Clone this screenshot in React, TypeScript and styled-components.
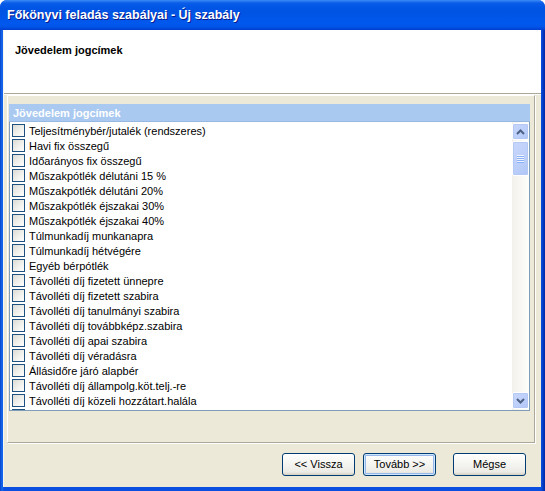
import * as React from "react";
import styled, { createGlobalStyle } from "styled-components";

const GlobalStyle = createGlobalStyle`
  html, body {
    margin: 0;
    padding: 0;
    background: #ffffff;
  }
  * {
    box-sizing: border-box;
  }
`;

// the last entry is the row cut off by the list's bottom edge
const items = [
  "Teljesítménybér/jutalék (rendszeres)",
  "Havi fix összegű",
  "Időarányos fix összegű",
  "Műszakpótlék délutáni 15 %",
  "Műszakpótlék délutáni 20%",
  "Műszakpótlék éjszakai 30%",
  "Műszakpótlék éjszakai 40%",
  "Túlmunkadíj munkanapra",
  "Túlmunkadíj hétvégére",
  "Egyéb bérpótlék",
  "Távolléti díj fizetett ünnepre",
  "Távolléti díj fizetett szabira",
  "Távolléti díj tanulmányi szabira",
  "Távolléti díj továbbképz.szabira",
  "Távolléti díj apai szabira",
  "Távolléti díj véradásra",
  "Állásidőre járó alapbér",
  "Távolléti díj állampolg.köt.telj.-re",
  "Távolléti díj közeli hozzátart.halála",
  "",
];

const Window = styled.div`
  width: 545px;
  height: 491px;
  display: flex;
  flex-direction: column;
  border-radius: 7px 7px 0 0;
  overflow: hidden;
  background: linear-gradient(90deg, #0842c8 0, #166aee 2px, #0a4fe0 4px, #0a4fe0 calc(100% - 4px), #0027a8 100%);
`;

const TitleBar = styled.div`
  height: 30px;
  flex: none;
  display: flex;
  align-items: center;
  padding: 0 0 1px 7px;
  background: linear-gradient(
    180deg,
    #3c8cf6 0,
    #0a5ce8 3px,
    #0055e5 8px,
    #0054e3 40%,
    #0058ee 80%,
    #0054e6 90%,
    #003dd0 100%
  );
`;

const TitleText = styled.span`
  font-family: "Liberation Sans", Arial, sans-serif;
  font-weight: bold;
  font-size: 12.5px;
  color: #ffffff;
  text-shadow: 1px 1px 0 #0a1a8a;
`;

const Client = styled.div`
  flex: 1;
  min-height: 0;
  margin: 0 4px 4px 3px;
  display: flex;
  flex-direction: column;
  background: #ece9d8;
  border-left: 1px solid #f6f5ef;
`;

const Header = styled.div`
  height: 64px;
  flex: none;
  background: #ffffff;
  padding: 14px 0 0 11px;
  border-bottom: 1px solid #aca899;
  box-shadow: 0 1px 0 #ffffff;
`;

const HeaderTitle = styled.div`
  font-family: "Liberation Sans", Arial, sans-serif;
  font-weight: bold;
  font-size: 11px;
  color: #000000;
`;

const Body = styled.div`
  flex: 1;
  min-height: 0;
  display: flex;
  padding: 1px 6px 0 3px;
`;

const Panel = styled.div`
  flex: 1;
  min-height: 0;
  display: flex;
  flex-direction: column;
  padding: 8px 4px 31px 1px;
  border-left: 1px solid #ffffff;
  border-top: 1px solid #ffffff;
  border-right: 1px solid #aca899;
  border-bottom: 1px solid #aca899;
  box-shadow: 1px 1px 0 #ffffff;
`;

const GroupHeader = styled.div`
  height: 18px;
  flex: none;
  display: flex;
  align-items: center;
  padding: 0 0 0 4px;
  background: #a9c9f0;
  border-bottom: 1px solid #98b8e2;
  font-family: "Liberation Sans", Arial, sans-serif;
  font-weight: bold;
  font-size: 11px;
  color: #ffffff;
`;

const ListBox = styled.div`
  flex: 1;
  min-height: 0;
  display: flex;
  background: #ffffff;
  border: 1px solid #7f9db9;
  border-top: none;
  overflow: hidden;
`;

const Rows = styled.div`
  flex: 1;
  padding: 1px 0 0 2px;
  overflow: hidden;
`;

const Row = styled.div`
  height: 15px;
  display: flex;
  align-items: center;
  gap: 4px;
  font-family: "Liberation Sans", Arial, sans-serif;
  font-size: 11px;
  color: #000000;
  white-space: nowrap;
`;

const Check = styled.span`
  width: 13px;
  height: 13px;
  flex: none;
  border: 1px solid #1c5180;
  background: linear-gradient(135deg, #dcdcd7 0%, #f0f0ec 55%, #ffffff 100%);
`;

const ScrollTrack = styled.div`
  width: 17px;
  flex: none;
  display: flex;
  flex-direction: column;
  padding: 1px 0;
  background: linear-gradient(90deg, #f3f1ec 0%, #fefefb 100%);
`;

const ScrollButton = styled.div<{ $tall?: number; $top?: number }>`
  height: ${(p) => p.$tall ?? 17}px;
  margin-top: ${(p) => p.$top ?? 0}px;
  flex: none;
  display: flex;
  align-items: center;
  justify-content: center;
  border: 1px solid #ffffff;
  border-radius: 2px;
  background: linear-gradient(135deg, #c8d6fb 0%, #bccffa 60%, #b0c6f6 100%);
  box-shadow: inset 0 0 0 1px #b4c8f6;
`;

const Grip = styled.div`
  display: flex;
  flex-direction: column;
  gap: 1px;
`;

const GripLine = styled.span`
  width: 7px;
  height: 1px;
  background: #eef4fe;
  box-shadow: 0 1px 0 #8cb0f8;
`;

const Spacer = styled.div`
  flex: 1;
`;

const Footer = styled.div`
  height: 44px;
  flex: none;
  display: flex;
  align-items: center;
  justify-content: flex-end;
  padding: 0 15px 2px 0;
`;

const Button = styled.button<{ $default?: boolean; $gap?: number }>`
  width: 73px;
  height: 23px;
  margin-left: ${(p) => p.$gap ?? 0}px;
  border: 1px solid #003c74;
  border-radius: 3px;
  background: linear-gradient(180deg, #ffffff 0%, #f6f6f3 40%, #ecebe6 85%, #d6d0c5 100%);
  box-shadow: ${(p) =>
    p.$default ? "inset 0 0 0 1px #cee7ff, inset 0 0 0 2px #98b8ea" : "none"};
  font-family: "Liberation Sans", Arial, sans-serif;
  font-size: 11px;
  color: #000000;
  padding: 0;
`;

const Arrow = ({ up }: { up?: boolean }) => (
  <svg width="9" height="6" viewBox="0 0 9 6">
    <path
      d={up ? "M1 5 L4.5 1.5 L8 5" : "M1 1 L4.5 4.5 L8 1"}
      fill="none"
      stroke="#4d6185"
      strokeWidth="2"
    />
  </svg>
);

export default function App() {
  return (
    <>
      <GlobalStyle />
      <Window>
        <TitleBar>
          <TitleText>Főkönyvi feladás szabályai - Új szabály</TitleText>
        </TitleBar>
        <Client>
          <Header>
            <HeaderTitle>Jövedelem jogcímek</HeaderTitle>
          </Header>
          <Body>
            <Panel>
              <GroupHeader>Jövedelem jogcímek</GroupHeader>
              <ListBox>
                <Rows>
                  {items.map((item, i) => (
                    <Row key={i}>
                      <Check />
                      {item}
                    </Row>
                  ))}
                </Rows>
                <ScrollTrack>
                  <ScrollButton>
                    <Arrow up />
                  </ScrollButton>
                  <ScrollButton $tall={35} $top={1}>
                    <Grip>
                      <GripLine />
                      <GripLine />
                      <GripLine />
                      <GripLine />
                    </Grip>
                  </ScrollButton>
                  <Spacer />
                  <ScrollButton>
                    <Arrow />
                  </ScrollButton>
                </ScrollTrack>
              </ListBox>
            </Panel>
          </Body>
          <Footer>
            <Button>&lt;&lt; Vissza</Button>
            <Button $default $gap={8}>
              Tovább &gt;&gt;
            </Button>
            <Button $gap={17}>Mégse</Button>
          </Footer>
        </Client>
      </Window>
    </>
  );
}
